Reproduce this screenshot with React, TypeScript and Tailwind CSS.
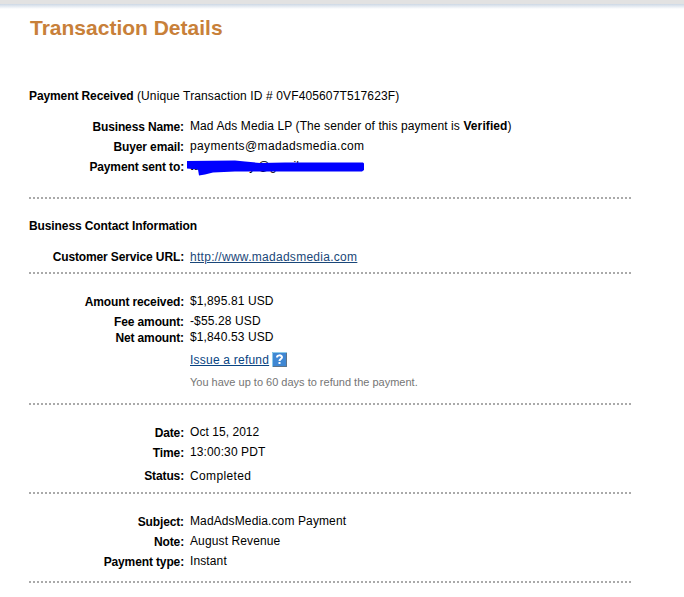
import type { PropsWithChildren, ReactNode } from "react";

type RowProps = PropsWithChildren<{
  label?: string;
  spacing?: string;
  labelClass?: string;
  valueClass?: string;
}>;

function Row({
  label,
  spacing = "mb-1",
  labelClass = "top-px",
  valueClass = "tracking-[0.12px]",
  children,
}: RowProps) {
  return (
    <div className={`flex h-4 ${spacing}`}>
      <dt
        className={`relative mr-[6px] w-[155px] shrink-0 text-right font-bold tracking-[-0.13px] ${labelClass}`}
      >
        {label}
      </dt>
      <dd className={`whitespace-nowrap ${valueClass}`}>{children}</dd>
    </div>
  );
}

function Divider() {
  return (
    <div className="h-[2px] w-[602px] bg-[repeating-linear-gradient(90deg,#aaaaaa_0_2px,transparent_2px_4px)]" />
  );
}

function Section({ className, children }: { className: string; children: ReactNode }) {
  return <dl className={className}>{children}</dl>;
}

function HelpIcon() {
  return (
    <svg width="15" height="15" viewBox="0 0 15 15" className="ml-[3px] shrink-0">
      <rect width="15" height="15" fill="#3f87d3" />
      <path d="M0.5 15V0.5H15" fill="none" stroke="#8ccbea" />
      <path d="M14.5 1V14.5H1" fill="none" stroke="#5f7488" />
      <path d="M5 5.5C5 2.7 10 2.7 10 5.3C10 7 7.5 7 7.5 9" fill="none" stroke="#fff" strokeWidth="2" />
      <rect x="6.5" y="10" width="2" height="2" fill="#fff" />
    </svg>
  );
}

// Blue marker stroke drawn over the recipient's address
function Redaction() {
  return (
    <svg width="180" height="20" viewBox="0 0 180 20" className="absolute -top-px -left-[5px]">
      <path
        d="M2 4L50 3.500L60 4.500L75 6L100 5.500H178L179 6.500V13L177 14.500L110 14.500L75 14.500L50 14.500L28 15.500L20 17.500L14 18.500L13 12.500L2 11.500Z"
        fill="#0000ff"
      />
    </svg>
  );
}

export default function App() {
  return (
    <div className="h-[597px] overflow-hidden bg-white font-['Liberation_Sans',Arial,sans-serif] text-[12px] leading-4 text-black">
      <div className="h-1 bg-[#e2e2e2]" />
      <div className="h-[5px] bg-linear-to-b from-[#cdd8e5] to-white" />

      <main className="ml-[29px]">
        <h1 className="mt-[6px] ml-px h-[26px] text-[21px] leading-[26px] font-bold text-[#c88039]">
          Transaction Details
        </h1>

        <p className="mt-[47px] h-4 tracking-[0.13px]">
          <b className="tracking-[-0.1px]">Payment Received</b> (Unique Transaction ID #
          0VF405607T517623F)
        </p>

        <Section className="mt-[14px] mb-[23px]">
          <Row label="Business Name:" valueClass="tracking-[0.1px]">
            Mad Ads Media LP (The sender of this payment is <b>Verified</b>)
          </Row>
          <Row label="Buyer email:" valueClass="tracking-[0.37px]">
            payments@madadsmedia.com
          </Row>
          <Row label="Payment sent to:" spacing="mb-0">
            <span className="relative block">
              tu<span className="inline-block w-[49px]" />y
              <span className="ml-[2px]">@gmail</span>
              <Redaction />
            </span>
          </Row>
        </Section>
        <Divider />

        <h2 className="mt-[19px] h-4 font-bold tracking-[-0.1px]">Business Contact Information</h2>
        <Section className="mt-[15px] mb-[7px]">
          <Row
            label="Customer Service URL:"
            spacing="mb-0"
            labelClass="top-0"
            valueClass="tracking-[0.28px]"
          >
            <a href="#" className="text-[#1a4779] underline">http://www.madadsmedia.com</a>
          </Row>
        </Section>
        <Divider />

        <Section className="mt-[19px] mb-[13px]">
          <Row label="Amount received:">$1,895.81 USD</Row>
          <Row label="Fee amount:" spacing="mb-0">-$55.28 USD</Row>
          <Row label="Net amount:" spacing="mb-[7px]">$1,840.53 USD</Row>
          <Row spacing="mb-[6px]" valueClass="tracking-[0.22px]">
            <span className="flex">
              <a href="#" className="text-[#084482] underline">Issue a refund</a>
              <HelpIcon />
            </span>
          </Row>
          <Row spacing="mb-0" valueClass="tracking-normal">
            <span className="text-[11px] text-[#757575]">
              You have up to 60 days to refund the payment.
            </span>
          </Row>
        </Section>
        <Divider />

        <Section className="mt-[19px] mb-[8px]">
          <Row label="Date:" valueClass="tracking-[0.05px]">Oct 15, 2012</Row>
          <Row label="Time:" spacing="mb-2">13:00:30 PDT</Row>
          <Row label="Status:" spacing="mb-0" labelClass="top-0" valueClass="tracking-[0.35px]">
            Completed
          </Row>
        </Section>
        <Divider />

        <Section className="mt-[19px] mb-[12px]">
          <Row label="Subject:">MadAdsMedia.com Payment</Row>
          <Row label="Note:">August Revenue</Row>
          <Row label="Payment type:" spacing="mb-0">Instant</Row>
        </Section>
        <Divider />
      </main>
    </div>
  );
}
